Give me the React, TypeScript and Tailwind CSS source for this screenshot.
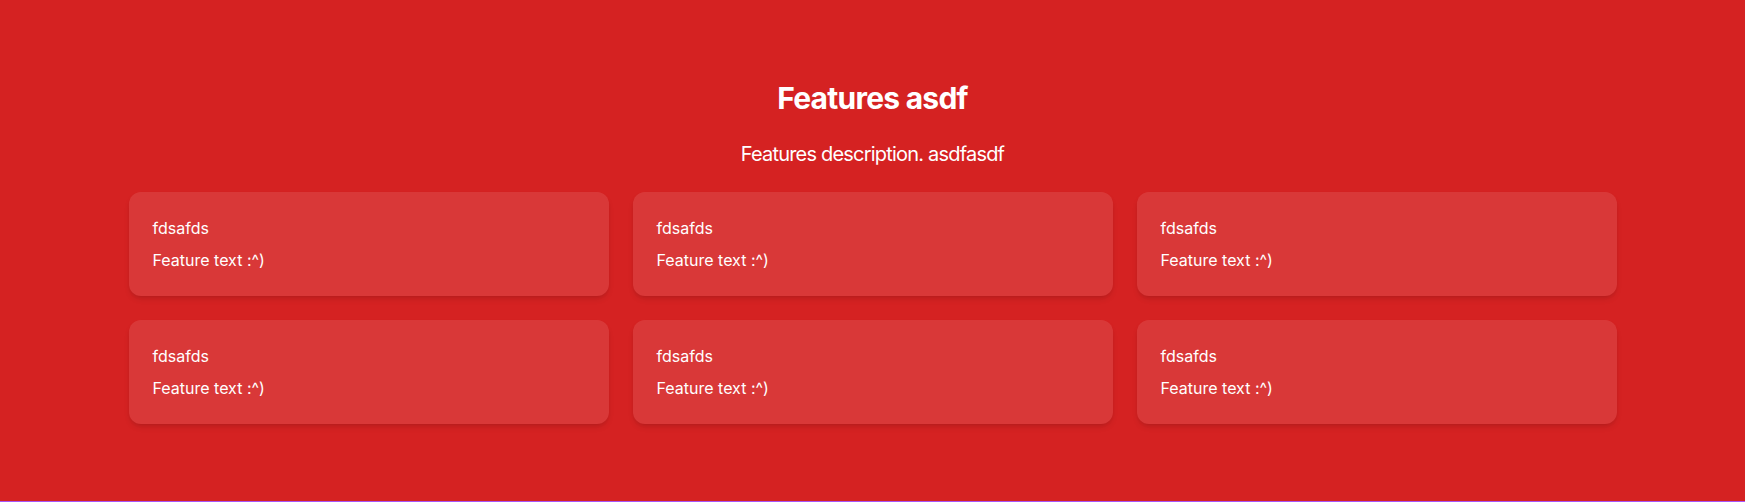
import React from 'react';

const features = Array.from({ length: 6 }, () => ({
  title: 'fdsafds',
  text: 'Feature text :^)',
}));

export default function App() {
  return (
    <div className="min-h-screen bg-[#d52222] text-white font-['Inter',sans-serif] antialiased">
      {/* Features section */}
      <section className="pt-20 pb-[77px]">
        <div className="mx-auto max-w-[1536px] px-6">
          <h2 className="text-center text-3xl font-bold tracking-tight">Features asdf</h2>
          <p className="mt-6 text-center text-xl tracking-[-0.04em]">Features description. asdfasdf</p>

          <div className="mt-6 grid grid-cols-3 gap-6">
            {features.map((f, i) => (
              <div key={i} className="h-[104px] rounded-xl bg-white/10 p-6 shadow-md">
                <p className="text-base">{f.title}</p>
                <p className="mt-2 text-base">{f.text}</p>
              </div>
            ))}
          </div>
        </div>
      </section>
      <div className="h-px bg-[#a855f7]" />
    </div>
  );
}
